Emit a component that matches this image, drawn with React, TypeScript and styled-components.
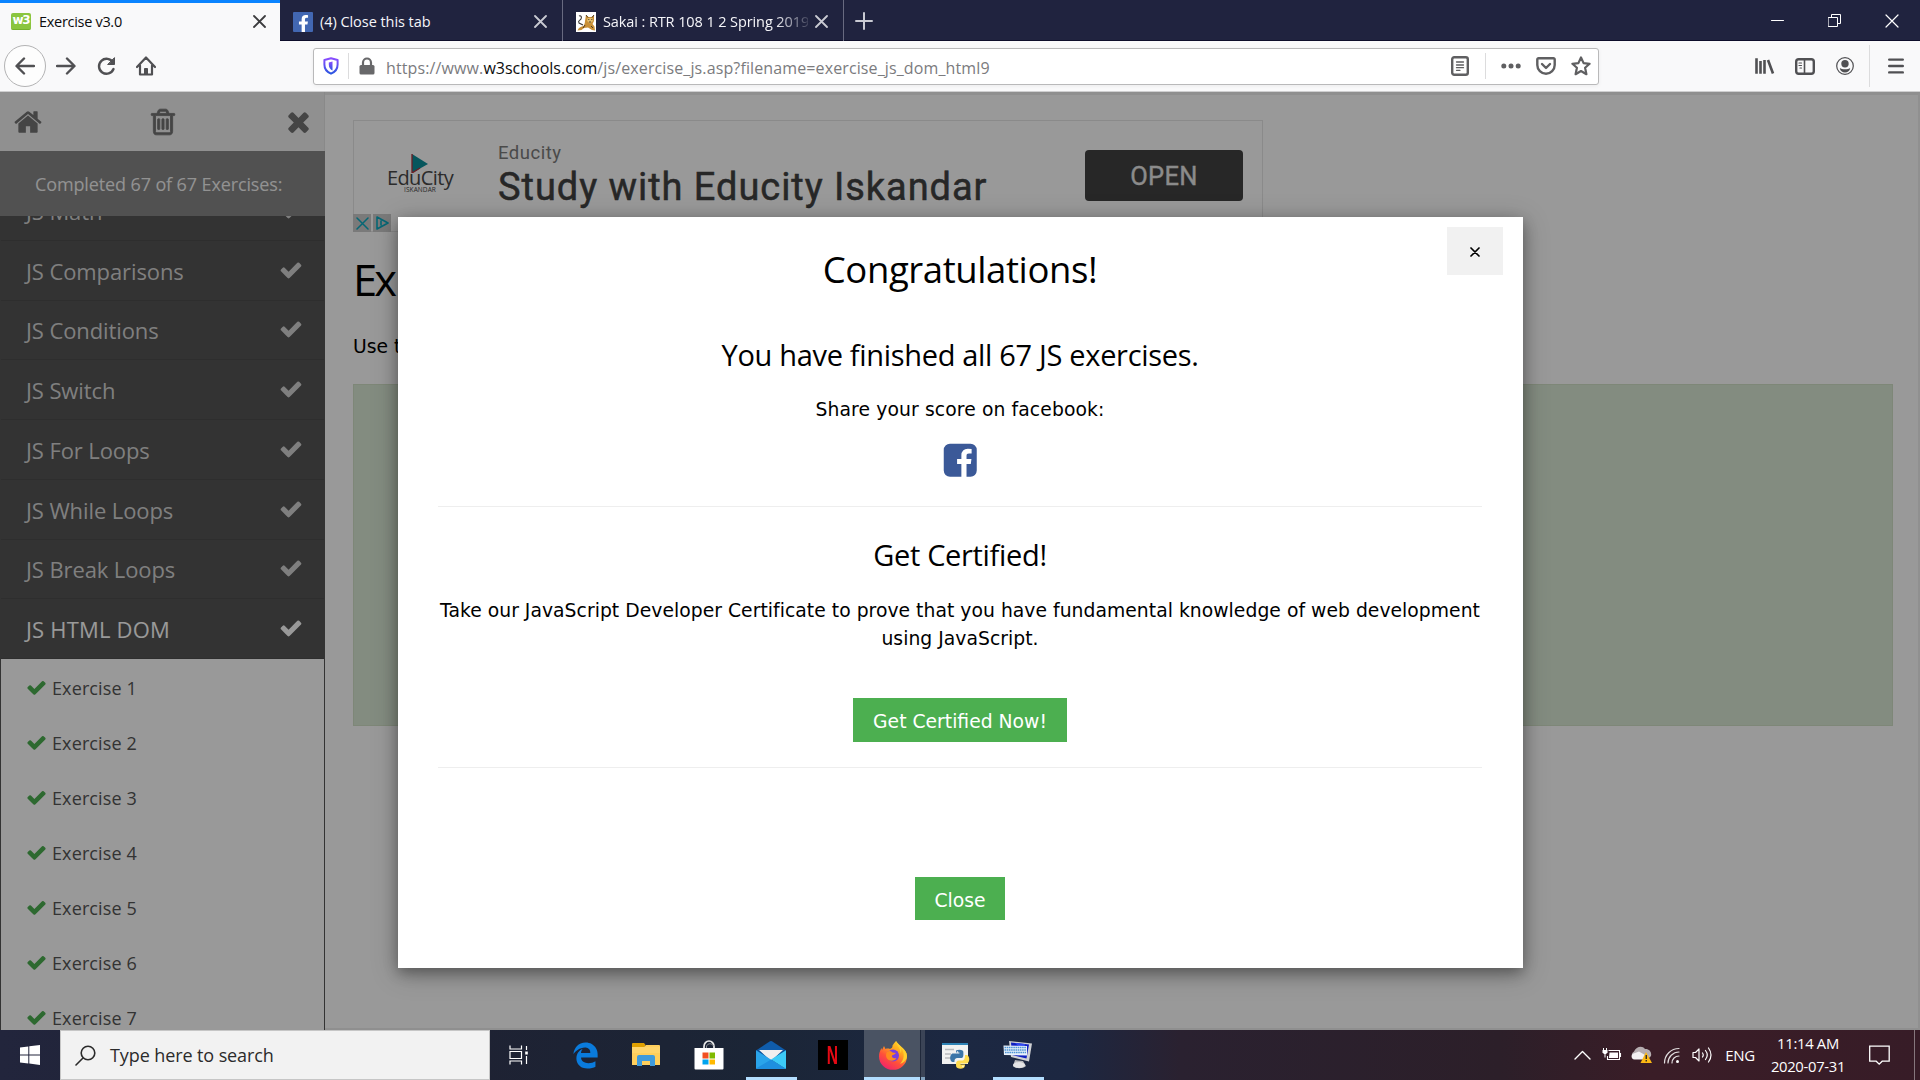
import React from "react";
import styled, { createGlobalStyle, css } from "styled-components";
import { FaFacebookF } from "react-icons/fa";
import { FaEdgeLegacy } from "react-icons/fa6";

const GlobalStyle = createGlobalStyle`
  * { box-sizing: border-box; }
  html, body { margin: 0; padding: 0; overflow: hidden; }
  body { font-family: "Open Sans", "Noto Sans", sans-serif; color: #000; }
  svg { display: block; flex: none; }
`;

const verdana = css`font-family: "DejaVu Sans", sans-serif; font-size: 18.75px; line-height: 28px;`;

const Desktop = styled.div`
  width: 1920px; height: 1080px; display: flex; flex-direction: column; overflow: hidden;
`;

/* ---------- tab strip ---------- */
const TabStrip = styled.div`
  height: 41px; flex: none; display: flex; background: #20233f; box-shadow: inset 0 -1px 0 #0d0d2a;
`;
const Tab = styled.div<{ $active?: boolean; $w: number }>`
  width: ${p => p.$w}px; display: flex; align-items: center; padding: 2px 14px 0 11px; gap: 8px;
  color: ${p => (p.$active ? "#0c0c0d" : "#f5f5f9")};
  ${p => p.$active
    ? css`background: #f9f9fa; box-shadow: inset 0 3px 0 #0a84ff; > svg { color: #3c3c3e; }`
    : css`border-right: 1px solid #686a80; padding-left: 13px; padding-right: 15px; gap: 7px; > svg:last-child { color: #c9cad3; }`}
`;
const TabTitle = styled.span<{ $ls: number; $fade?: boolean }>`
  flex: 1; min-width: 0; overflow: hidden; white-space: nowrap; font-size: 14.5px; line-height: 22px;
  letter-spacing: ${p => p.$ls}px;
  ${p => p.$fade && css`mask-image: linear-gradient(90deg, #000 84%, rgba(0,0,0,.15) 100%);`}
`;
const NewTab = styled.div`width: 40px; display: flex; align-items: center; justify-content: center; color: #c9cad3;`;
const WindowControls = styled.div`
  margin-left: auto; display: flex; align-items: center; color: #fff;
  > div { width: 57px; display: flex; justify-content: center; }
`;
const W3Badge = styled.div`
  width: 20px; height: 17px; border-radius: 2px; background: #8ac53f; color: #fff; flex: none;
  font: 700 12px/14px "DejaVu Sans", sans-serif; letter-spacing: -1.2px; text-align: center; overflow: hidden;
  border-bottom: 1px solid #74b02c;
`;
const FbBadge = styled.div`
  width: 20px; height: 20px; background: #4267b2; border-radius: 1px; color: #fff; flex: none;
  display: flex; justify-content: flex-end; align-items: flex-end; padding-right: 1px;
`;

/* ---------- toolbar ---------- */
const Toolbar = styled.div`
  height: 51px; flex: none; display: flex; align-items: center; padding-left: 4px;
  background: #f9f9fa; border-bottom: 1px solid #cfcfd0; color: #505053;
`;
const BackButton = styled.div`
  width: 42px; height: 42px; border: 1px solid #b3b3b4; border-radius: 50%; background: #fdfdfd;
  display: flex; align-items: center; justify-content: center;
`;
const Cell = styled.div<{ $w: number }>`
  width: ${p => p.$w}px; flex: none; display: flex; align-items: center; justify-content: center;
`;
const UrlBar = styled.div`
  margin-left: 147px; width: 1286px; height: 37px; display: flex; align-items: center; background: #fff;
  border: 1px solid #b9b9ba; border-radius: 3px; box-shadow: 0 1px 4px rgba(0,0,0,.06); color: #5f5f61;
`;
const Divider = styled.div<{ $h: number }>`width: 1px; height: ${p => p.$h}px; background: #dcdcdd;`;
const Url = styled.div`
  flex: 1; padding: 4px 0 0 1px; font-size: 16px; line-height: 24px; letter-spacing: .12px; color: #7b7b7e; white-space: nowrap;
  b { font-weight: 400; color: #0c0c0d; letter-spacing: 0; }
`;
const ToolbarRight = styled.div`margin-left: auto; height: 100%; display: flex; align-items: center;`;

/* ---------- page ---------- */
const Page = styled.div`position: relative; height: 938px; flex: none; display: flex; background: #fff; overflow: hidden;`;
const Sidebar = styled.aside`width: 325px; flex: none; display: flex; flex-direction: column; overflow: hidden;`;
const SideHead = styled.div`
  height: 59px; flex: none; display: flex; align-items: center; justify-content: space-between; padding: 0 10px 0 13px;
  background: #f1f1f1; color: #737373; border-right: 1px solid #e4e4e4;
`;
const Progress = styled.div`
  height: 65px; flex: none; background: #878787; color: #f4f4f4; padding-left: 35px;
  font-size: 18px; line-height: 66px; letter-spacing: -.12px;
`;
const ListClip = styled.div`flex: 1; min-height: 0; overflow: hidden; background: #555; padding: 0 1px;`;
const Topics = styled.div`margin-top: -35px;`;
const Topic = styled.div<{ $active?: boolean }>`
  height: 59.75px; display: flex; align-items: center; justify-content: space-between; padding: 0 21px 1px 25px;
  border-bottom: 1px solid #4e4e4e; font-size: 22px; line-height: 30px;
  color: ${p => (p.$active ? "#fff" : "#d4d4d4")};
  span { padding-top: 2px; letter-spacing: ${p => (p.$active ? ".2px" : "-.1px")}; }
`;
const Exercises = styled.div`background: #fff; padding-top: 1px; height: 400px;`;
const Exercise = styled.div`
  height: 55px; display: flex; align-items: center; gap: 5px; padding-left: 25px; color: #555;
  font-size: 18px; line-height: 26px; letter-spacing: .12px;
  svg { color: #4caf50; }
`;
const Main = styled.main`
  flex: 1; padding: 25px 25px 0 28px; border-top: 3px solid #eee; border-right: 2px solid #f1f1f1; border-bottom: 2px solid #eee;
`;
const Ad = styled.div`
  position: relative; width: 910px; height: 112px; border: 1px solid #e6e6e6; display: flex; padding: 21px 19px 0 30px;
`;
const AdLogo = styled.div`
  width: 72px; padding-top: 12px; display: flex; flex-direction: column; align-items: center; color: #484848;
  strong { font: 500 20px/18px "Open Sans", sans-serif; margin-top: -4px; letter-spacing: -.6px; }
  small { font: 500 6.5px/8px "Open Sans", sans-serif; letter-spacing: .1px; margin-top: -1px; }
`;
const AdCopy = styled.div`
  flex: 1; margin-left: 42px; font-family: Roboto, sans-serif; white-space: nowrap;
  p { margin: 0; font-size: 18.5px; line-height: 22px; letter-spacing: .5px; color: #7c7c7c; }
  h2 {
    margin: 1px 0 0; font-weight: 400; font-size: 38px; line-height: 44px; letter-spacing: .95px; color: #414141;
    -webkit-text-stroke: .5px #414141;
  }
`;
const AdButton = styled.div`
  width: 158px; height: 51px; margin: 8px 0 0 1px; border-radius: 4px; background: #414141; color: #e8e8e8; text-align: center;
  font: 400 25.5px/52px Roboto, sans-serif; letter-spacing: .3px; -webkit-text-stroke: .3px #e8e8e8;
`;
const AdChoices = styled.div`
  position: absolute; left: -1px; bottom: -1px; display: flex; gap: 2px; color: #0aacc4;
  span { width: 18px; height: 18px; background: #cbcbcb; display: flex; align-items: center; justify-content: center; }
`;
const PageTitle = styled.h1`margin: 18px 0 0; font-weight: 400; font-size: 43.5px; line-height: 60px; letter-spacing: -3px;`;
const Hint = styled.p`${verdana} margin: 23px 0 23px; white-space: nowrap;`;
const TaskBox = styled.div`height: 342px; background: #dbead6; border: 1px solid #d2e2c8;`;

/* ---------- modal ---------- */
const Overlay = styled.div`
  position: absolute; inset: 0; background: rgba(0,0,0,.4); display: flex; align-items: flex-start; padding: 125px 0 0 398px;
`;
const Modal = styled.div`
  position: relative; width: 1125px; height: 751px; background: #fff; padding: 24px 41px 0 40px;
  box-shadow: 0 5px 13px rgba(0,0,0,.3), 0 5px 25px rgba(0,0,0,.25);
  display: flex; flex-direction: column; align-items: center; text-align: center;
`;
const ModalClose = styled.div`
  position: absolute; right: 20px; top: 10px; width: 56px; height: 48px; background: #f1f1f1;
  display: flex; align-items: center; justify-content: center; padding-top: 2px;
`;
const Title = styled.h1`margin: 0; font-weight: 400; font-size: 36.5px; line-height: 56px; letter-spacing: -.4px;`;
const Subtitle = styled.h2<{ $mt: number }>`
  margin: ${p => p.$mt}px 0 0; font-weight: 400; font-size: 29px; line-height: 45px; letter-spacing: -.32px;
`;
const Para = styled.p<{ $mt: number; $ls: number }>`
  ${verdana} margin: ${p => p.$mt}px 0 0; letter-spacing: ${p => p.$ls}px;
`;
const Rule = styled.div<{ $mt: number }>`width: 100%; height: 1px; flex: none; margin-top: ${p => p.$mt}px; background: #eee;`;
const Green = styled.div<{ $mt: number; $w: number; $h: number }>`
  ${verdana} width: ${p => p.$w}px; height: ${p => p.$h}px; margin-top: ${p => p.$mt}px; padding-top: 10px;
  background: #4caf50; color: #fff; white-space: nowrap;
`;
const ShareIcon = styled.div`height: 33px; margin-top: 20px; display: flex; align-items: center; color: #3b5998;`;

/* ---------- taskbar ---------- */
const Taskbar = styled.div`
  height: 50px; flex: none; display: flex; color: #fff;
  background: linear-gradient(90deg, #22253c 0, #1e2233 480px, #1b2536 760px, #1c2842 960px, #1c2741 1070px, #2a2130 1180px, #2c1f29 1500px, #3a1d27 1650px, #371c27 1920px);
`;
const Search = styled.div`
  width: 430px; display: flex; align-items: center; gap: 14px; padding-left: 14px; background: #f2f2f2;
  border: 1px solid #c6c6c6; color: #2b2b2b; font-size: 18px; letter-spacing: -.1px;
`;
const TaskButton = styled.div<{ $w?: number; $running?: boolean; $focused?: boolean; $nudge?: number }>`
  width: ${p => p.$w ?? 62}px; height: 50px; display: flex; align-items: center; justify-content: center;
  padding-right: ${p => p.$nudge ?? 0}px;
  ${p => p.$running && css`background: linear-gradient(#b3deff, #b3deff) center bottom / 51px 3px no-repeat;`}
  ${p => p.$focused && css`
    background:
      linear-gradient(#b3deff, #b3deff) left bottom / 56px 3px no-repeat,
      linear-gradient(90deg, #1f2a3c 1px, #82a3bf 1px) right bottom / 5px 3px no-repeat,
      linear-gradient(90deg, #4a5363 56px, #20293b 56px, #20293b 57px, #3b4456 57px);
  `}
`;
const EdgeButton = styled(TaskButton)`color: #0a7bdc;`;
const NetflixTile = styled.div`
  width: 30px; height: 30px; background: #000; color: #e50914; display: flex; align-items: center; justify-content: center;
  span { font: 700 26px/30px "Liberation Sans", sans-serif; transform: scaleX(.6); }
`;
const Tray = styled.div`margin-left: auto; display: flex; align-items: center;`;
const Lang = styled.div`width: 46px; text-align: center; font-size: 15px; letter-spacing: -.4px;`;
const Clock = styled.div`
  width: 90px; text-align: center; font-size: 14.8px; line-height: 23px; letter-spacing: -.3px;
`;
const ShowDesktop = styled.div`width: 6px; height: 50px; margin-left: 9px; border-left: 1px solid #86777d;`;

/* ---------- icons ---------- */
const glyphs = {
  check: "M1671 566q0 40-28 68l-724 724-136 136q-28 28-68 28t-68-28l-136-136-362-362q-28-28-28-68t28-68l136-136q28-28 68-28t68 28l294 295 656-657q28-28 68-28t68 28l136 136q28 28 28 68z",
  home: "M1472 992v480q0 26-19 45t-45 19h-384v-384h-256v384h-384q-26 0-45-19t-19-45v-480q0-1 .5-3t.5-3l575-474 575 474q1 2 1 6zm223-69l-62 74q-8 9-21 11h-3q-13 0-21-7l-692-577-692 577q-12 8-24 7-13-2-21-11l-62-74q-8-10-7-23.5t11-21.5l719-599q32-26 76-26t76 26l244 204v-195q0-14 9-23t23-9h192q14 0 23 9t9 23v408l219 182q10 8 11 21.5t-7 23.5z",
  times: "M1490 1322q0 40-28 68l-136 136q-28 28-68 28t-68-28l-294-294-294 294q-28 28-68 28t-68-28l-136-136q-28-28-28-68t28-68l294-294-294-294q-28-28-28-68t28-68l136-136q28-28 68-28t68 28l294 294 294-294q28-28 68-28t68 28l136 136q28 28 28 68t-28 68l-294 294 294 294q28 28 28 68z",
  trash: "M704 736v576q0 14-9 23t-23 9h-64q-14 0-23-9t-9-23v-576q0-14 9-23t23-9h64q14 0 23 9t9 23zm256 0v576q0 14-9 23t-23 9h-64q-14 0-23-9t-9-23v-576q0-14 9-23t23-9h64q14 0 23 9t9 23zm256 0v576q0 14-9 23t-23 9h-64q-14 0-23-9t-9-23v-576q0-14 9-23t23-9h64q14 0 23 9t9 23zm128 724v-948h-896v948q0 22 7 40.5t14.5 27 10.5 8.5h832q3 0 10.5-8.5t14.5-27 7-40.5zm-672-1076h448l-48-117q-7-9-17-11h-317q-10 2-17 11zm928 32v64q0 14-9 23t-23 9h-96v948q0 83-47 143.5t-113 60.5h-832q-66 0-113-58.5t-47-141.5v-952h-96q-14 0-23-9t-9-23v-64q0-14 9-23t23-9h309l70-167q15-37 54-63t79-26h320q40 0 79 26t54 63l70 167h309q14 0 23 9t9 23z",
  facebook: "M1376 128q119 0 203.5 84.5t84.5 203.5v960q0 119-84.5 203.5t-203.5 84.5h-188v-595h199l30-232h-229v-148q0-56 23.5-84t91.5-28l122-1v-207q-63-9-178-9-136 0-217.5 80t-81.5 226v171h-200v232h200v595h-532q-119 0-203.5-84.5t-84.5-203.5v-960q0-119 84.5-203.5t203.5-84.5h960z",
};
const Glyph = ({ name, size, bold = 0 }: { name: keyof typeof glyphs; size: number; bold?: number }) => (
  <svg width={size} height={size} viewBox="0 0 1792 1792" fill="currentColor" stroke="currentColor" strokeWidth={bold}><path d={glyphs[name]} /></svg>
);

type LineProps = { size?: number; w?: number; h?: number; sw?: number; box?: string; children: React.ReactNode };
const Line = ({ size = 20, w, h, sw = 2, box, children }: LineProps) => (
  <svg width={w ?? size} height={h ?? size} viewBox={box ?? `0 0 ${w ?? size} ${h ?? size}`} fill="none" stroke="currentColor"
    strokeWidth={sw} strokeLinecap="round" strokeLinejoin="round">{children}</svg>
);
const Cross = ({ size, sw = 1.8 }: { size: number; sw?: number }) => (
  <Line size={size} sw={sw}><path d={`M1 1L${size - 1} ${size - 1}M${size - 1} 1L1 ${size - 1}`} /></Line>
);

const SakaiIcon = () => (
  <svg width="20" height="20" viewBox="0 0 20 20">
    <path d="M0 0h20v20H0z" fill="#fff" />
    <path d="M1.500 18.500c1-3 4-4 6-4.500 1-2 1.500-3 1.500-5l1-6 2.500 2h3L18 3v6l-1.500 3 2 2.500.5 4-3-.5-4-2.500-4 .5-2.500 2z" fill="#c98f35" />
    <path d="M11.500 6h5l.500 3-3 2.500L11 9z" fill="#e3bd6c" />
    <path d="M3 4c2-1 3 1 2 3S1.500 8 3 11l4 2" fill="none" stroke="#3a3734" strokeWidth="1.100" />
    <path d="M10 3l2 2.500M18 3l-2 2.500M12.300 7.500h1M15.300 7.500h1M13 10h2M9 13l-2 3M15 14l2 2" stroke="#3f3020" strokeWidth=".9" />
  </svg>
);

const StoreIcon = () => (
  <svg width="30" height="30" viewBox="0 0 30 30">
    <path d="M10 9V6.500a5 5.500 0 0 1 10 0V9" fill="none" stroke="#e9e9e9" strokeWidth="1.700" />
    <path d="M12.500 8V6a4 4.500 0 0 1 7 0" fill="none" stroke="#8e9095" strokeWidth="1" />
    <path d="M.500 8h29v20.500a1 1 0 0 1-1 1h-27a1 1 0 0 1-1-1z" fill="#fff" />
    <path d="M8.500 12.500h6v6h-6z" fill="#f25022" /><path d="M15.500 12.500h5.500v6h-5.500z" fill="#7fba00" />
    <path d="M8.500 19.500h6v5h-6z" fill="#00a4ef" /><path d="M15.500 19.500h5.500v5h-5.500z" fill="#ffb900" />
  </svg>
);
const FolderIcon = () => (
  <svg width="28" height="24" viewBox="0 0 28 24">
    <path d="M0 1a1 1 0 0 1 1-1h11l1.500 2-1.500 3H0z" fill="#e0a000" />
    <path d="M0 4h12l2-2h13a1 1 0 0 1 1 1v19H0z" fill="#ffcf5c" />
    <path d="M0 4h28v6H0z" fill="#ffd874" opacity=".6" />
    <path d="M5 23v-9a2 2 0 0 1 2-2h14a2 2 0 0 1 2 2v9h-5v-5h-8v5z" fill="#3f9bdc" />
  </svg>
);
const MailIcon = () => (
  <svg width="30" height="30" viewBox="0 0 30 30">
    <path d="M0 10.500L14 1.300q1-.6 2 0L30 10.500z" fill="#0f5cab" />
    <path d="M0 10h30v9H0z" fill="#0c4f97" />
    <path d="M3 10h24L15 21z" fill="#f1efef" />
    <path d="M0 10.300L30 29H1a1 1 0 0 1-1-1z" fill="#2aa4ea" />
    <path d="M30 10.300L15 19.500 30 29z" fill="#3ccbf7" />
    <path d="M0 28.500L15 19.500l15 9.500H1z" fill="#1e8fdf" />
  </svg>
);
const FirefoxIcon = () => (
  <svg width="30" height="30" viewBox="0 0 30 30">
    <defs>
      <linearGradient id="fxBody" x1=".85" y1="0" x2=".25" y2="1">
        <stop offset="0" stopColor="#ffe226" /><stop offset=".35" stopColor="#ffa41f" />
        <stop offset=".65" stopColor="#ff5139" /><stop offset="1" stopColor="#f0206e" />
      </linearGradient>
    </defs>
    <path d="M18 1c1 2 3 3 4.500 5C26 9 29 12 29 16.500A14 13.300 0 0 1 1 16.500C1 13 2 10.500 3.500 8l.5 2L6 6l1.500 3c1.500-.6 3-.5 4.500 0 2-1 2.500-1.500 2.500-3.500C15.500 4 16.500 2.500 18 1z" fill="url(#fxBody)" />
    <circle cx="15" cy="15.500" r="6" fill="#7a3ee0" />
    <path d="M9 12c2-1.500 4-1 5.500.5L18 13c-1.500 1.500-3 2-4 2.500-.5 2 1.500 3.500 4.500 2.500-1.500 3-7 4-9.500.5-1.300-2-1.200-4.500 0-6.500z" fill="#ff8a1f" />
    <path d="M18 1c0 4 4.500 6.500 4.500 12 1-1 1-3 .7-5 4 5 3 12-1.200 16C26.500 22 29 19.500 29 16 29 9 20 6 18 1z" fill="#ffcf2e" />
  </svg>
);
const PythonIcon = () => (
  <svg width="30" height="30" viewBox="0 0 30 30">
    <path d="M1 3h26v21H1z" fill="#f2f2f1" /><path d="M1 3h26v2H1z" fill="#2f83b5" />
    <path d="M4 9.500h9M4 14h6M4 18h6" stroke="#b9bbbd" strokeWidth="1.300" />
    <path d="M15 10.500c2-1 5-1 6.500 0 1 .8.900 1.500.900 4 0 3-1 3.500-3 3.500h-3c-2 0-3 1-3 4h-2c-3-1-3-7 0-8.500h7v-1H15z" fill="#3b75a8" />
    <path d="M24 15h2c3 1.500 3 7 0 8.500h-6.500v1H24c0 2-.5 3-1.500 3.500-2 1-4.500.8-6 0-1.300-.8-1.500-1.500-1.500-3.500 0-3 1-4 3-4h3c2 0 3-1.500 3-5.500z" fill="#ffdc50" />
    <circle cx="16.500" cy="12" r=".8" fill="#fff" /><circle cx="22" cy="26.300" r=".8" fill="#fff" />
  </svg>
);
const PuttyIcon = () => (
  <svg width="30" height="30" viewBox="0 0 30 30">
    <path d="M6 1l23 2.500-3 18L8 17z" fill="#cfd0d3" /><path d="M8 2.500l18 2-2.500 14L9 15z" fill="#0f1fc0" />
    <path d="M12 3l10 1-1 7z" fill="#2f48f0" />
    <path d="M12 20l8 1 3 5c-3 3-11 3-13 0z" fill="#b9babd" /><ellipse cx="16" cy="25" rx="6" ry="3" fill="#e4e4e6" />
    <path d="M.500 5.500L24 6v9.500L1 15z" fill="#e9f1fa" />
    <path d="M1.500 7.500h22M1.500 10h22M2 12.500h21" stroke="#4c93d4" strokeWidth="1.500" strokeDasharray="1.600 .6" />
  </svg>
);

const topics = ["JS Math", "JS Comparisons", "JS Conditions", "JS Switch", "JS For Loops", "JS While Loops", "JS Break Loops", "JS HTML DOM"];

export default function App() {
  return (
    <Desktop>
      <GlobalStyle />
      <TabStrip>
        <Tab $active $w={280}>
          <W3Badge>w3</W3Badge><TabTitle $ls={-0.3}>Exercise v3.0</TabTitle><Cross size={13} />
        </Tab>
        <Tab $w={283}>
          <FbBadge><FaFacebookF size={17} /></FbBadge><TabTitle $ls={-0.05}>(4) Close this tab</TabTitle><Cross size={13} />
        </Tab>
        <Tab $w={281}>
          <SakaiIcon /><TabTitle $ls={-0.1} $fade>Sakai : RTR 108 1 2 Spring 2019</TabTitle><Cross size={13} />
        </Tab>
        <NewTab><Line size={18}><path d="M9 1v16M1 9h16" /></Line></NewTab>
        <WindowControls>
          <div><Line size={13} sw={1}><path d="M.500 6.500h12" /></Line></div>
          <div><Line size={13} sw={1}><path d="M.500 3.500h9v9h-9zM3.500 3.500v-3h9v9h-3" /></Line></div>
          <div><Cross size={14} sw={1.2} /></div>
        </WindowControls>
      </TabStrip>

      <Toolbar>
        <BackButton><Line size={20} sw={2.4}><path d="M19 10H2M9 2.500L1.500 10 9 17.500" /></Line></BackButton>
        <Cell $w={40}><Line size={20} sw={2.4}><path d="M1 10h17M11 2.500l7.500 7.500-7.500 7.500" /></Line></Cell>
        <Cell $w={40}>
          <Line size={20} sw={2.4}><path d="M17 6.500A7.500 7.500 0 1 0 17.500 13" /><path d="M18.500 2v6.500H12z" fill="currentColor" strokeWidth="1" /></Line>
        </Cell>
        <Cell $w={40}>
          <Line size={20} sw={2.2}><path d="M1 11l9-9.500 9 9.500M4 9.500V18.500h12V9.500" /><path d="M8.500 18v-5.500h3V18z" fill="currentColor" strokeWidth="1" /></Line>
        </Cell>
        <UrlBar>
          <Cell $w={34}>
            <svg width="16" height="18" viewBox="0 0 16 18">
              <defs><linearGradient id="shield" x1="0" y1="0" x2="0" y2="1"><stop offset="0" stopColor="#8a4dff" /><stop offset="1" stopColor="#2a55e0" /></linearGradient></defs>
              <path d="M8 1.300l6.600 1.700v4.500c0 4.500-2.500 7.500-6.600 9.200C3.900 15 1.400 12 1.400 7.500V3z" fill="none" stroke="url(#shield)" strokeWidth="2" strokeLinejoin="round" />
              <path d="M8 4.500v9c-2.500-1.300-3.700-3.300-3.700-6V5.400z" fill="url(#shield)" transform="translate(1.500 0)" />
            </svg>
          </Cell>
          <Divider $h={26} />
          <Cell $w={36}>
            <svg width="16" height="18" viewBox="0 0 16 18" fill="#68686a">
              <path d="M4 9V5.500a4 4 0 0 1 8 0V9" fill="none" stroke="#68686a" strokeWidth="2.200" />
              <rect x=".5" y="8" width="15" height="9.500" rx="1.500" />
            </svg>
          </Cell>
          <Url>https://www.<b>w3schools.com</b>/js/exercise_js.asp?filename=exercise_js_dom_html9</Url>
          <Cell $w={35}>
            <Line w={18} h={20} sw={2.4}><rect x="1.200" y="1.200" width="15.600" height="17.600" rx="2" /><path d="M5.500 6h7M5.500 9h7M5.500 11.700h7M5.500 14.300h3.500" strokeWidth="1.300" /></Line>
          </Cell>
          <Cell $w={16}><Divider $h={26} /></Cell>
          <Cell $w={35}>
            <svg width="20" height="6" fill="#5f5f61"><circle cx="2.800" cy="3" r="2.500" /><circle cx="10" cy="3" r="2.500" /><circle cx="17.200" cy="3" r="2.500" /></svg>
          </Cell>
          <Cell $w={35}>
            <Line w={20} h={18} sw={2.4}><path d="M2.500 1.300h15a1.200 1.200 0 0 1 1.200 1.200v5.500a8.700 8.700 0 0 1-17.400 0V2.500a1.200 1.200 0 0 1 1.200-1.200zM6 7l4 4 4-4" /></Line>
          </Cell>
          <Cell $w={35}>
            <Line size={20} sw={2.2}><path d="M10 1.500l2.600 5.600 6 .7-4.500 4 1.300 6.400L10 15l-5.400 3.200 1.300-6.400-4.500-4 6-.7z" /></Line>
          </Cell>
        </UrlBar>
        <ToolbarRight>
          <Cell $w={40}><Line w={20} h={18} sw={2.6}><path d="M1.500 1.200v15.600M5.500 4v12.800M9.500 3v13.800M13 3l5 13.500" strokeLinecap="butt" /></Line></Cell>
          <Cell $w={40}><Line w={20} h={17} sw={2.4}><rect x="1.200" y="1.200" width="17.600" height="14.600" rx="2.500" /><path d="M9.500 1.500v14" strokeWidth="1.600" /><path d="M4 5h2.500M4 7.500h2.500M5 10h1.500" strokeWidth="1.200" /></Line></Cell>
          <Cell $w={40}>
            <svg width="18" height="18" viewBox="0 0 18 18" fill="currentColor">
              <circle cx="9" cy="9" r="8.300" fill="none" stroke="currentColor" strokeWidth="1.200" />
              <circle cx="9" cy="6.700" r="3.700" /><path d="M3.800 11c1 1 3 1.300 5.200 1.300s4.200-.3 5.200-1.300c-.3 2.800-2.500 4.500-5.200 4.500S4.100 13.800 3.800 11z" />
            </svg>
          </Cell>
          <Cell $w={9}><Divider $h={42} /></Cell>
          <Cell $w={44}><Line w={16} h={16} sw={2.4}><path d="M1.200 1.600h13.600M1.200 8h13.600M1.200 14.400h13.600" /></Line></Cell>
          <Cell $w={2} />
        </ToolbarRight>
      </Toolbar>

      <Page>
        <Sidebar>
          <SideHead><Glyph name="home" size={30} /><Glyph name="trash" size={30} bold={50} /><Glyph name="times" size={31} /></SideHead>
          <Progress>Completed 67 of 67 Exercises:</Progress>
          <ListClip>
            <Topics>
              {topics.map((t, i) => (
                <Topic key={t} $active={i === topics.length - 1}><span>{t}</span><Glyph name="check" size={24} /></Topic>
              ))}
            </Topics>
            <Exercises>
              {[1, 2, 3, 4, 5, 6, 7].map(n => (
                <Exercise key={n}><Glyph name="check" size={21} />Exercise {n}</Exercise>
              ))}
            </Exercises>
          </ListClip>
        </Sidebar>
        <Main>
          <Ad>
            <AdLogo>
              <svg width="18" height="19" viewBox="0 0 18 19"><path d="M1 0l16 10L1 19z" fill="#0a8f9c" /><path d="M1 0v19l8-5" fill="none" stroke="#b5323c" strokeWidth="1.300" /></svg>
              <strong>EduCity</strong><small>ISKANDAR</small>
            </AdLogo>
            <AdCopy><p>Educity</p><h2>Study with Educity Iskandar</h2></AdCopy>
            <AdButton>OPEN</AdButton>
            <AdChoices>
              <span><Cross size={13} sw={1.5} /></span>
              <span><Line size={14} sw={1.6}><path d="M2 1l11 6-11 6zM6 5v4" /></Line></span>
            </AdChoices>
          </Ad>
          <PageTitle>Ex</PageTitle>
          <Hint>Use t</Hint>
          <TaskBox />
        </Main>
        <Overlay>
          <Modal>
            <ModalClose><Cross size={10} sw={1.7} /></ModalClose>
            <Title>Congratulations!</Title>
            <Subtitle $mt={35}>You have finished all 67 JS exercises.</Subtitle>
            <Para $mt={19} $ls={0.11}>Share your score on facebook:</Para>
            <ShareIcon><Glyph name="facebook" size={38.5} /></ShareIcon>
            <Rule $mt={29} />
            <Subtitle $mt={25}>Get Certified!</Subtitle>
            <Para $mt={20} $ls={0.036}>Take our JavaScript Developer Certificate to prove that you have fundamental knowledge of web development using JavaScript.</Para>
            <Green $mt={45} $w={214} $h={44}>Get Certified Now!</Green>
            <Rule $mt={25} />
            <Green $mt={109} $w={90} $h={43}>Close</Green>
          </Modal>
        </Overlay>
      </Page>

      <Taskbar>
        <TaskButton $w={60}>
          <svg width="20" height="20" viewBox="0 0 20 20" fill="#fff"><path d="M0 2.600L8.300 1.500v8H0zM9.300 1.300L20 0v9.500H9.300zM0 10.500h8.300v8L0 17.400zM9.300 10.500H20V20L9.300 18.600z" /></svg>
        </TaskButton>
        <Search><Line size={21} sw={1.6}><circle cx="13" cy="8" r="6.800" /><path d="M8 13l-7 7" /></Line>Type here to search</Search>
        <TaskButton $w={64} $nudge={6}>
          <Line w={20} h={20} sw={1.2}><path d="M1 .500v3.500h11.500V.500M1 19.500V16h11.500v3.500M1 6.500h11.500v7H1zM17.500 1v4M17.500 11v8" strokeLinecap="butt" strokeLinejoin="miter" /><path d="M16.200 6.500h2.600v3h-2.600z" fill="#fff" stroke="none" /></Line>
        </TaskButton>
        <EdgeButton><FaEdgeLegacy size={27} /></EdgeButton>
        <TaskButton $nudge={2}><FolderIcon /></TaskButton>
        <TaskButton $nudge={1}><StoreIcon /></TaskButton>
        <TaskButton $nudge={1} $running><MailIcon /></TaskButton>
        <TaskButton $nudge={1}><NetflixTile><span>N</span></NetflixTile></TaskButton>
        <TaskButton $nudge={4} $w={61} $focused><FirefoxIcon /></TaskButton>
        <TaskButton><PythonIcon /></TaskButton>
        <TaskButton $running><PuttyIcon /></TaskButton>
        <Tray>
          <Cell $w={30}><Line w={17} h={10} sw={1.4}><path d="M1 9l7.500-7.500L16 9" /></Line></Cell>
          <Cell $w={30}>
            <svg width="20" height="14" viewBox="0 0 20 14" fill="none" stroke="#fff">
              <path d="M6.500 2.500h11v9h-12V8M18.500 5v4" strokeWidth="1.100" /><path d="M7.500 4.500h8.500v5.500H7z" fill="#fff" stroke="none" />
              <path d="M1.500 0v2M4.500 0v2M3 6v3.500" /><path d="M.500 2h5v2.500L4 6H2L.500 4.500z" fill="#fff" stroke="none" />
            </svg>
          </Cell>
          <Cell $w={30}>
            <svg width="22" height="18" viewBox="0 0 22 18"><path d="M4 13a4 4 0 0 1-1-7.500C5 1 11-1 14 3c4-.5 7 3 6 7l-3 3z" fill="#b5adb0" /><path d="M3.500 13.500c-4-.5-4-6 .5-6.500l4-1.500 6 3.500v4.500z" fill="#f2f0f1" /><path d="M15 6l6 11H9.500z" fill="#fcb813" /><path d="M14.600 9h1.300v4h-1.300zM14.600 14h1.300v1.500h-1.300z" fill="#222" /></svg>
          </Cell>
          <Cell $w={30}>
            <Line w={18} h={17} sw={1.2}><path d="M1.500 16C1.500 8 8 1.500 16 1.500M5 16C5 10 10 5 16 5M9 16c0-4 3-7 7-7" opacity=".85" /><circle cx="14.500" cy="14.500" r="1.500" fill="#fff" stroke="none" /></Line>
          </Cell>
          <Cell $w={30}>
            <Line w={20} h={16} sw={1.2}><path d="M1 5.500h2.500L7 2v12l-3.500-3.500H1zM10.500 6q1.500 2 0 4M13.500 3.500q3.500 4.500 0 9M16.500 1q5 7 0 14" /></Line>
          </Cell>
          <Lang>ENG</Lang>
          <Clock>11:14 AM<br />2020-07-31</Clock>
          <Cell $w={52}><Line w={21} h={21} sw={1.3}><path d="M.700 1.200h19.500v15h-7l-3 3-3-3H.700z" strokeLinejoin="miter" /></Line></Cell>
          <ShowDesktop />
        </Tray>
      </Taskbar>
    </Desktop>
  );
}
